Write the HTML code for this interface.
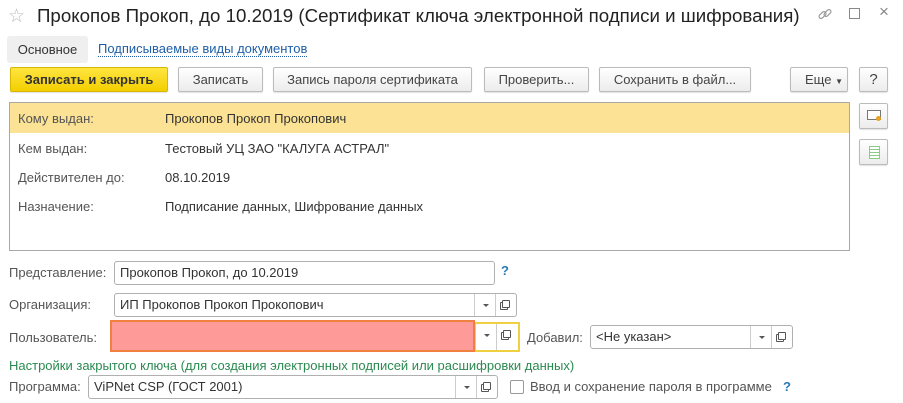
<!DOCTYPE html>
<html><head><meta charset="utf-8"><style>
*{box-sizing:border-box;margin:0;padding:0}
body{width:903px;height:403px;background:#fff;font-family:"Liberation Sans",sans-serif;font-size:13px;color:#333;position:relative;overflow:hidden}
.a{position:absolute;white-space:nowrap}
.btn{position:absolute;top:67px;height:25px;border:1px solid #bbb;border-radius:2px;background:linear-gradient(#fff,#ececec);text-align:center;line-height:23px;color:#444;box-shadow:0 1px 1px rgba(0,0,0,.12)}
.inp{position:absolute;border:1px solid #b0b0b0;border-radius:3px;background:#fff;height:24px;line-height:22px;padding-left:5px;color:#333}
.dd{position:absolute;top:0;bottom:0;width:21px;border-left:1px solid #ccc}
.dd.t::after{content:"";position:absolute;left:8px;top:10px;border:3px solid transparent;border-top:3px solid #555}
.dd.o::after{content:"";position:absolute;left:6px;top:6px;width:6px;height:6px;border:1px solid #555;border-radius:1px;box-shadow:-2px 2px 0 -1px #fff,-2px 2px 0 0 #555}
.lbl{color:#555}
</style></head><body>
<div class="a" style="left:8px;top:5px;font-size:19px;color:#bbb">☆</div>
<div class="a" style="left:37px;top:5px;font-size:18.7px;color:#222">Прокопов Прокоп, до 10.2019 (Сертификат ключа электронной подписи и шифрования)</div>
<svg class="a" style="left:817px;top:6px" width="16" height="16" viewBox="0 0 16 16" fill="none" stroke="#999" stroke-width="1.2"><rect x="1.5" y="7" width="8" height="4" rx="2" transform="rotate(-45 5.5 9)"/><rect x="6.5" y="5" width="8" height="4" rx="2" transform="rotate(-45 10.5 7)"/></svg>
<div class="a" style="left:849px;top:8px;width:11px;height:11px;border:1px solid #888"></div>
<div class="a" style="left:879px;top:2px;font-size:17px;color:#888">×</div>
<div class="a" style="left:7px;top:36px;width:81px;height:27px;background:#efefef;border-radius:3px;text-align:center;line-height:27px">Основное</div>
<div class="a" style="left:98px;top:41px;color:#1e5fa8;border-bottom:1px dotted #1e5fa8;line-height:15px">Подписываемые виды документов</div>
<div class="btn" style="left:10px;width:158px;background:linear-gradient(#ffe640,#f3cf00);border-color:#d8b800;color:#333;font-weight:bold">Записать и закрыть</div>
<div class="btn" style="left:178px;width:85px">Записать</div>
<div class="btn" style="left:273px;width:199px">Запись пароля сертификата</div>
<div class="btn" style="left:484px;width:105px">Проверить...</div>
<div class="btn" style="left:599px;width:152px">Сохранить в файл...</div>
<div class="btn" style="left:790px;width:58px;text-align:left;padding-left:14px">Еще <span style="font-size:8px">▼</span></div>
<div class="btn" style="left:859px;width:29px;font-size:15px">?</div>
<div class="a" style="left:9px;top:102px;width:841px;height:149px;border:1px solid #a8a8a8">
<div style="height:30px;background:#fbe294"></div></div>
<div class="a lbl" style="left:18px;top:111px">Кому выдан:</div><div class="a" style="left:165px;top:111px">Прокопов Прокоп Прокопович</div>
<div class="a lbl" style="left:18px;top:141px">Кем выдан:</div><div class="a" style="left:165px;top:141px">Тестовый УЦ ЗАО "КАЛУГА АСТРАЛ"</div>
<div class="a lbl" style="left:18px;top:170px">Действителен до:</div><div class="a" style="left:165px;top:170px">08.10.2019</div>
<div class="a lbl" style="left:18px;top:199px">Назначение:</div><div class="a" style="left:165px;top:199px">Подписание данных, Шифрование данных</div>
<div class="btn" style="left:859px;top:103px;width:29px;height:26px"><div style="position:absolute;left:7px;top:6px;width:14px;height:10px;border:1px solid #777;background:#fff"></div><div style="position:absolute;left:16px;top:12px;width:5px;height:5px;border-radius:50%;background:#e8a020"></div></div>
<div class="btn" style="left:859px;top:139px;width:29px;height:26px"><div style="position:absolute;left:9px;top:6px;width:11px;height:13px;border:1px solid #8c8;background:repeating-linear-gradient(#fff 0 2px,#8c8 2px 3px)"></div></div>
<div class="a lbl" style="left:9px;top:265px">Представление:</div>
<div class="inp" style="left:114px;top:261px;width:381px">Прокопов Прокоп, до 10.2019</div>
<div class="a" style="left:501px;top:263px;color:#2a7ab8;font-weight:bold">?</div>
<div class="a lbl" style="left:9px;top:297px">Организация:</div>
<div class="inp" style="left:114px;top:293px;width:403px">ИП Прокопов Прокоп Прокопович<div class="dd t" style="right:21px"></div><div class="dd o" style="right:0"></div></div>
<div class="a lbl" style="left:9px;top:330px">Пользователь:</div>
<div class="a" style="left:110px;top:322px;width:410px;height:30px;border:2px solid #f0d040"></div>
<div class="a" style="left:110px;top:320px;width:365px;height:32px;background:#fe9a98;border:2px solid #f08040"></div>
<div class="a" style="left:475px;top:324px;width:43px;height:26px"><div class="dd t" style="left:0;border-left:1px solid #ccc"></div><div class="dd o" style="left:21px"></div></div>
<div class="a lbl" style="left:527px;top:330px">Добавил:</div>
<div class="inp" style="left:590px;top:325px;width:203px">&lt;Не указан&gt;<div class="dd t" style="right:21px"></div><div class="dd o" style="right:0"></div></div>
<div class="a" style="left:9px;top:358px;color:#2a8a50">Настройки закрытого ключа (для создания электронных подписей или расшифровки данных)</div>
<div class="a lbl" style="left:9px;top:379px">Программа:</div>
<div class="inp" style="left:88px;top:375px;width:410px">ViPNet CSP (ГОСТ 2001)<div class="dd t" style="right:21px"></div><div class="dd o" style="right:0"></div></div>
<div class="a" style="left:510px;top:380px;width:14px;height:14px;border:1px solid #999;border-radius:2px"></div>
<div class="a lbl" style="left:530px;top:379px">Ввод и сохранение пароля в программе</div>
<div class="a" style="left:783px;top:379px;color:#2a7ab8;font-weight:bold">?</div>
</body></html>
